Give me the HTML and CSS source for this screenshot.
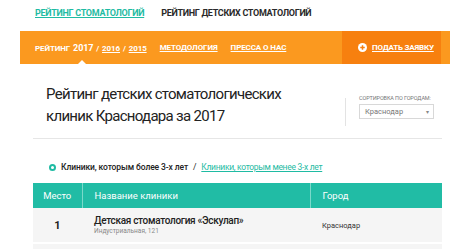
FILE: index.html
```html
<!DOCTYPE html>
<html lang="ru">
<head>
  <meta charset="UTF-8">
  <title>Рейтинг детских стоматологий</title>
  <link rel="stylesheet" href="styles.css">
</head>
<body>

  <!-- Верхние вкладки -->
  <div class="tabs">
    <a href="#" class="tab">Рейтинг стоматологий</a>
    <a href="#" class="tab active">Рейтинг детских стоматологий</a>
  </div>

  <!-- Оранжевое меню -->
  <nav class="menu">
    <div class="menu-links">
      <span class="year-item">
        Рейтинг <span class="current">2017</span> / <a href="#">2016</a> / <a href="#">2015</a>
        <span class="pointer"></span>
      </span>
      <a href="#">Методология</a>
      <a href="#">Пресса о нас</a>
    </div>
    <a href="#" class="apply">
      <svg class="plus" viewBox="0 0 12 12" aria-hidden="true">
        <circle cx="6" cy="6" r="6" fill="#fff"/>
        <path d="M6 3v6M3 6h6" stroke="#f77f10" stroke-width="2"/>
      </svg>
      <span>Подать заявку</span>
    </a>
  </nav>

  <div class="content">
    <div class="head">
      <h1>Рейтинг детских стоматологических клиник Краснодара за 2017</h1>
      <div class="city">
        <div class="city-label">Сортировка по городам:</div>
        <div class="select">
          <span>Краснодар</span>
          <span class="arrow">&#9662;</span>
        </div>
      </div>
    </div>

    <div class="filter">
      <span class="dot"></span>
      <span class="current-filter">Клиники, которым более 3-х лет</span>
      <span class="slash">/</span>
      <a href="#">Клиники, которым менее 3-х лет</a>
    </div>

    <table class="rating">
      <thead>
        <tr>
          <th class="place">Место</th>
          <th>Название клиники</th>
          <th class="town">Город</th>
        </tr>
      </thead>
      <tbody>
        <tr>
          <td class="place">1</td>
          <td>
            <div class="clinic">Детская стоматология «Эскулап»</div>
            <div class="address">Индустриальная, 121</div>
          </td>
          <td class="town">Краснодар</td>
        </tr>
        <tr>
          <td class="place"></td>
          <td></td>
          <td class="town"></td>
        </tr>
      </tbody>
    </table>
  </div>

</body>
</html>
```

FILE: styles.css
```css
* {
  margin: 0;
  padding: 0;
  box-sizing: border-box;
}

body {
  font-family: Roboto, 'Noto Sans', Arial, sans-serif;
  background-color: #fff;
  color: #222;
  overflow: hidden;
}

a {
  color: inherit;
}

.tabs {
  display: flex;
  gap: 17px;
  height: 31px;
  padding: 8px 0 0 35px;
}

.tab {
  font-size: 9px;
  font-weight: bold;
  text-transform: uppercase;
  color: #1fbba3;
  letter-spacing: -0.3px;
  white-space: nowrap;
}

.tab.active {
  color: #2a2a2a;
  text-decoration: none;
}

/* меню */
.menu {
  display: flex;
  justify-content: space-between;
  align-items: stretch;
  height: 33px;
  margin-left: 20px;
  background-color: #fb991f;
  padding-right: 9px;
}

.menu-links {
  display: flex;
  align-items: center;
  gap: 13px;
  padding-left: 15px;
  color: #fff;
  font-size: 8px;
  font-weight: bold;
  text-transform: uppercase;
  white-space: nowrap;
  letter-spacing: -0.1px;
}

.menu-links a {
  color: #fff;
}

.year-item {
  position: relative;
  word-spacing: 1px;
}

.year-item .current {
  font-size: 9px;
}

.pointer {
  position: absolute;
  left: 43px;
  bottom: -11px;
  border-left: 4px solid transparent;
  border-right: 4px solid transparent;
  border-bottom: 4px solid #fff;
}

.apply {
  display: flex;
  align-items: center;
  gap: 5px;
  width: 99px;
  padding-left: 16px;
  background-color: #f7800f;
  color: #fff;
  font-size: 8px;
  font-weight: bold;
  text-transform: uppercase;
  text-decoration: none;
  white-space: nowrap;
  letter-spacing: -0.2px;
}

.apply span {
  text-decoration: underline;
}

.plus {
  width: 9px;
  height: 9px;
  flex-shrink: 0;
}

/* контент */
.content {
  margin-left: 33px;
  width: 409px;
}

.head {
  display: flex;
  justify-content: space-between;
  height: 75px;
  padding: 19px 0 0 13px;
  border-bottom: 1px solid #e6e6e6;
}

h1 {
  width: 262px;
  font-size: 15px;
  font-weight: normal;
  line-height: 22px;
  color: #222;
  letter-spacing: -0.7px;
}

.city {
  width: 97px;
  height: 28px;
  margin-top: 15px;
  padding-left: 13px;
  border-left: 1px solid #e3e3e3;
}

.city-label {
  margin-top: -3px;
  font-size: 5.5px;
  color: #777;
  text-transform: uppercase;
  letter-spacing: -0.1px;
  white-space: nowrap;
}

.select {
  display: flex;
  justify-content: space-between;
  align-items: center;
  width: 75px;
  height: 15px;
  margin-top: 3px;
  padding: 0 4px 0 5px;
  border: 1px solid #d8d8d8;
  font-size: 7.5px;
  color: #777;
}

.select .arrow {
  font-size: 6px;
  color: #888;
}

.filter {
  display: flex;
  align-items: center;
  height: 44px;
  padding: 12px 0 0 16px;
  font-size: 8.5px;
  color: #222;
  white-space: nowrap;
  letter-spacing: -0.3px;
}

.filter .dot {
  width: 7px;
  height: 7px;
  margin-right: 5px;
  border-radius: 50%;
  border: 2px solid #1fbba3;
  background-color: #fff;
}

.filter .current-filter {
  font-weight: 500;
  letter-spacing: -0.1px;
}

.filter .slash {
  margin: 0 5px;
}

.filter a {
  color: #1fbba3;
}

/* таблица */
.rating {
  width: 100%;
  border-collapse: collapse;
}

.rating th {
  height: 25px;
  padding: 0 12px;
  background-color: #21bca5;
  color: #fff;
  font-size: 9.5px;
  font-weight: normal;
  text-align: left;
  border-left: 1px solid #7ad9ca;
}

.rating th:first-child {
  border-left: none;
}

.rating th.place {
  width: 49px;
  padding: 0;
  text-align: center;
}

.rating th.town {
  width: 132px;
}

.rating td {
  height: 35px;
  padding: 0 12px;
  background-color: #f5f5f5;
  border-bottom: 2px solid #fff;
  vertical-align: middle;
}

.rating td.place {
  padding: 0;
  text-align: center;
  font-size: 11px;
  font-weight: bold;
}

.clinic {
  font-size: 10px;
  font-weight: 500;
  color: #222;
  letter-spacing: -0.3px;
}

.address {
  margin-top: 1px;
  font-size: 6.5px;
  color: #888;
}

.rating td.town {
  font-size: 7.5px;
  color: #333;
}
```
